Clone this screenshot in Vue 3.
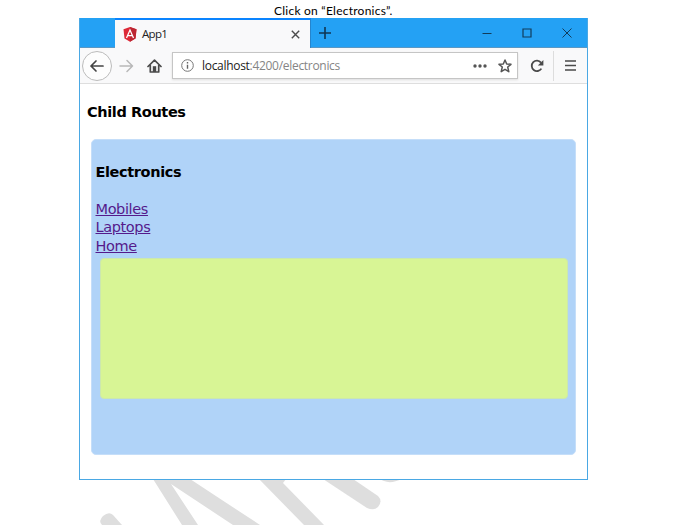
<script setup>
const links = ['Mobiles', 'Laptops', 'Home']
</script>

<template>
  <div class="page">
    <svg class="watermark" viewBox="0 0 689 525" aria-hidden="true">
      <g fill="#dedede">
        <path d="M153 479H190L260 525H233L171 484L198 525H182Z" />
        <path d="M259 479H286L283 483L324 525H304Z" />
        <path d="M323 479H353L378 496Q383 501 378 507Q374 511 367 508Z" />
        <path d="M379 479H402Q391 484 384 481Z" />
        <path d="M102 525Q98 521 103 516Q109 511 113 515L122 525Z" />
      </g>
    </svg>
    <p class="caption"><span>Click on “Electronics”.</span></p>
    <main class="window">
      <header class="titlebar">
        <div class="tab">
          <svg class="logo" width="14" height="15" viewBox="0 0 14 15">
            <path d="M7 0L13.5 2.3L12.5 11.4L7 14.8L1.5 11.4L.5 2.3Z" fill="#dd2937" />
            <path d="M7 0L13.5 2.3L12.5 11.4L7 14.8Z" fill="#bc2632" />
            <path d="M3.5 11L7 3L10.5 11M4.8 8.7H9.2" fill="none" stroke="#fff" stroke-width="1.3" />
          </svg>
          <span class="title">App1</span>
          <svg width="9" height="9" viewBox="0 0 9 9"><path d="M.8.8L8.2 8.2M8.2.8L.8 8.2" stroke="#4c4c4c" stroke-width="1.4" /></svg>
        </div>
        <svg class="plus" width="12" height="12" viewBox="0 0 12 12"><path d="M6 0V12M0 6H12" stroke="#103653" stroke-width="1.6" /></svg>
        <div class="controls">
          <svg width="10" height="10" viewBox="0 0 10 10"><path d="M.5 5.5H9.5" stroke="#123c5b" /></svg>
          <svg width="10" height="10" viewBox="0 0 10 10"><path d="M1 1H9V9H1Z" fill="none" stroke="#123c5b" stroke-width="1.2" /></svg>
          <svg width="10" height="10" viewBox="0 0 10 10"><path d="M.5.5L9.5 9.5M9.5.5L.5 9.5" stroke="#123c5b" /></svg>
        </div>
      </header>
      <nav class="toolbar">
        <div class="back">
          <svg width="16" height="14" viewBox="0 0 16 14"><path d="M14 7H2M7 2L2 7L7 12" fill="none" stroke="#444" stroke-width="1.7" stroke-linecap="round" stroke-linejoin="round" /></svg>
        </div>
        <svg class="forward" width="15" height="14" viewBox="0 0 15 14"><path d="M1 7H13.5M8 1.5L13.5 7L8 12.5" fill="none" stroke="#b8b8b8" stroke-width="1.5" stroke-linecap="round" stroke-linejoin="round" /></svg>
        <svg class="home" width="15" height="14" viewBox="0 0 15 14">
          <path d="M1 7.5L7.5 1.2L14 7.5M3.3 6.5V13H11.7V6.5" fill="none" stroke="#4a4a4a" stroke-width="1.7" stroke-linecap="round" stroke-linejoin="round" />
          <path d="M5.8 13V7.2H9.2V13Z" fill="#4a4a4a" />
        </svg>
        <div class="address">
          <svg width="13" height="13" viewBox="0 0 13 13"><circle cx="6.5" cy="6.5" r="5.8" fill="none" stroke="#777" /><path d="M6.5 5.7V9.8M6.5 3V4.4" stroke="#666" stroke-width="1.4" /></svg>
          <span class="url">localhost<i>:4200/electronics</i></span>
          <svg class="dots" width="14" height="4" viewBox="0 0 14 4"><g fill="#555"><circle cx="2" cy="2" r="1.7" /><circle cx="7" cy="2" r="1.7" /><circle cx="12" cy="2" r="1.7" /></g></svg>
          <svg class="star" width="14" height="14" viewBox="0 0 14 14"><path d="M7 1L8.7 5L13 5.3L9.7 8L10.8 12.7L7 10.3L3.2 12.7L4.3 8L1 5.3L5.3 5Z" fill="none" stroke="#555" stroke-width="1.5" stroke-linejoin="round" /></svg>
        </div>
        <svg class="reload" width="14" height="14" viewBox="0 0 14 14"><path d="M11.4 9.6A5.2 5.2 0 1 1 11 3.6" fill="none" stroke="#4a4a4a" stroke-width="1.8" /><path d="M13.4 1V6.5H7.8Z" fill="#4a4a4a" /></svg>
        <div class="menu">
          <svg width="11" height="11" viewBox="0 0 11 11"><path d="M.5 1H10.5M.5 5.5H10.5M.5 10H10.5" stroke="#4a4a4a" stroke-width="1.6" stroke-linecap="round" /></svg>
        </div>
      </nav>
      <section class="content">
        <h1>Child Routes</h1>
        <div class="panel">
          <h2>Electronics</h2>
          <div class="links"><a v-for="link in links" :key="link" href="#">{{ link }}</a></div>
          <div class="outlet"></div>
        </div>
      </section>
    </main>
  </div>
</template>

<style>
body { background: #fff; }
</style>
<style scoped>
* { box-sizing: border-box; }
svg { display: block; flex: none; }
.page { position: relative; width: 689px; height: 525px; overflow: hidden; }
.watermark { position: absolute; inset: 0; width: 689px; height: 525px; }
.caption { margin: 0 0 0 274px; height: 18px; font: 12px/21px Lato, sans-serif; letter-spacing: .24px; color: #000; white-space: nowrap; }
.window { position: relative; margin-left: 79px; width: 509px; height: 462px; border: 1px solid #4aa8e4; border-top: 0; background: #fff; }
.titlebar { height: 30px; display: flex; align-items: center; background: #24a1f4; border-bottom: 1px solid #5b98c4; padding-left: 35px; }
.tab { width: 196px; height: 30px; align-self: flex-start; background: #f9f9fa; border-top: 2px solid #0a84ff; border-right: 1px solid #2585ce; display: flex; align-items: center; padding: 0 10px 0 8px; }
.title { flex: 1; margin-left: 5px; font: 11.5px/16px "Open Sans", sans-serif; letter-spacing: -.7px; color: #222; }
.plus { margin-left: 8px; }
.controls { margin-left: auto; padding-right: 15px; display: flex; gap: 30px; }
.toolbar { height: 36px; display: flex; align-items: center; background: #f9f9fa; border-bottom: 1px solid #dedede; padding-left: 2px; }
.back { width: 30px; height: 30px; border: 1px solid #bcbcbc; border-radius: 50%; background: #fdfdfd; display: grid; place-items: center; }
.forward { margin-left: 7px; }
.home { margin-left: 13px; }
.address { margin-left: 10px; width: 346px; height: 27px; border: 1px solid #c5c5c5; background: #fff; display: flex; align-items: center; padding: 0 5px 0 8px; box-shadow: 0 1px 2px #ddd; }
.url { flex: 1; margin-left: 8px; font: 12px/18px "Open Sans", sans-serif; letter-spacing: -.3px; color: #222; white-space: nowrap; padding-top: 1px; }
.url i { font-style: normal; color: #858585; }
.star { margin-left: 11px; }
.reload { margin-left: 12px; }
.menu { margin-left: 9px; height: 30px; border-left: 1px solid #ddd; padding-left: 11px; display: flex; align-items: center; }
.content { padding: 19px 7px 0; font: 14.5px/18px "DejaVu Sans", sans-serif; letter-spacing: -.38px; color: #000; }
h1, h2 { margin: 0; font-size: 14.5px; line-height: 18px; font-weight: 700; white-space: nowrap; }
.panel { margin: 18px 0 0 4px; width: 485px; height: 316px; border: 1px solid #c5def9; border-radius: 5px; background: #b0d3f8; padding: 23px 4px 0 3.5px; }
.links { margin-top: 19px; display: flex; flex-direction: column; align-items: flex-start; }
a { color: #551a8b; line-height: 18.4px; }
.outlet { margin: 2.8px 0 0 4px; width: 468px; height: 141px; border: 1px solid #cce8ae; border-radius: 4px; background: #d8f595; }
</style>
